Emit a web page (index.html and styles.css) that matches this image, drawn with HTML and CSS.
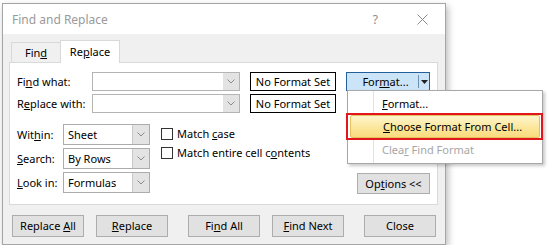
FILE: index.html
```html
<!DOCTYPE html>
<html lang="en">
<head>
    <meta charset="UTF-8">
    <title>Find and Replace</title>
    <link rel="stylesheet" href="styles.css">
</head>
<body>
    <div class="dialog">
        <div class="titlebar">
            <span class="title">Find and Replace</span>
            <span class="help">?</span>
            <svg class="close" width="11" height="11" viewBox="0 0 11 11"><path d="M0.5 0.5 L10.5 10.5 M10.5 0.5 L0.5 10.5" stroke="#8a8a8a" stroke-width="1"/></svg>
        </div>

        <div class="tabs">
            <div class="tab">Fin<u>d</u></div>
            <div class="tab active">Re<u>p</u>lace</div>
        </div>

        <div class="panel">
            <div class="top-grid">
                <label>Fi<u>n</u>d what:</label>
                <div class="combo"><span class="combo-btn"><svg width="8" height="5" viewBox="0 0 8 5"><path d="M0.5 0.5 L4 4 L7.5 0.5" fill="none" stroke="#8c8c8c"/></svg></span></div>
                <div class="fmt-box">No Format Set</div>
                <div class="split">
                    <span class="split-main">For<u>m</u>at...</span>
                    <span class="split-arrow"><svg width="7" height="4" viewBox="0 0 7 4"><path d="M0 0 L7 0 L3.5 4 Z" fill="#222"/></svg></span>

                    <!-- menu opened from the split button -->
                    <div class="menu">
                        <div class="menu-item"><u>F</u>ormat...</div>
                        <div class="menu-item hot"><div class="hot-bg"><u>C</u>hoose Format From Cell...</div></div>
                        <div class="menu-item disabled">Clea<u>r</u> Find Format</div>
                    </div>
                </div>

                <label>R<u>e</u>place with:</label>
                <div class="combo"><span class="combo-btn"><svg width="8" height="5" viewBox="0 0 8 5"><path d="M0.5 0.5 L4 4 L7.5 0.5" fill="none" stroke="#8c8c8c"/></svg></span></div>
                <div class="fmt-box">No Format Set</div>
            </div>

            <div class="lower">
                <div class="opt-grid">
                    <label>Wit<u>h</u>in:</label>
                    <div class="select"><span class="select-val">Sheet</span><span class="combo-btn"><svg width="8" height="5" viewBox="0 0 8 5"><path d="M0.5 0.5 L4 4 L7.5 0.5" fill="none" stroke="#8c8c8c"/></svg></span></div>
                    <label><u>S</u>earch:</label>
                    <div class="select"><span class="select-val">By Rows</span><span class="combo-btn"><svg width="8" height="5" viewBox="0 0 8 5"><path d="M0.5 0.5 L4 4 L7.5 0.5" fill="none" stroke="#8c8c8c"/></svg></span></div>
                    <label><u>L</u>ook in:</label>
                    <div class="select"><span class="select-val">Formulas</span><span class="combo-btn"><svg width="8" height="5" viewBox="0 0 8 5"><path d="M0.5 0.5 L4 4 L7.5 0.5" fill="none" stroke="#8c8c8c"/></svg></span></div>
                </div>
                <div class="checks">
                    <div class="check"><span class="box"></span><span>Match <u>c</u>ase</span></div>
                    <div class="check"><span class="box"></span><span>Match entire cell c<u>o</u>ntents</span></div>
                </div>
                <div class="btn options">Op<u>t</u>ions &lt;&lt;</div>
            </div>
        </div>

        <div class="buttons">
            <div class="btn">Replace <u>A</u>ll</div>
            <div class="btn"><u>R</u>eplace</div>
            <div class="btn wide-gap">Fi<u>n</u>d All</div>
            <div class="btn"><u>F</u>ind Next</div>
            <div class="btn wide-gap">Close</div>
        </div>
    </div>
</body>
</html>
```

FILE: styles.css
```css
* {
    box-sizing: border-box;
}

body {
    margin: 0;
    background: #fff;
    font-family: 'Noto Sans', sans-serif;
    font-size: 11px;
    color: #000;
}

u {
    text-decoration: underline;
    text-underline-offset: 1px;
}

label {
    white-space: nowrap;
}

.dialog {
    position: relative;
    margin: 3px 0 0 2px;
    width: 444px;
    height: 242px;
    background: #f0f0f0;
    border: 1px solid #a5a5a5;
    box-shadow: 2px 3px 7px rgba(0, 0, 0, 0.28);
}

.titlebar {
    display: flex;
    align-items: center;
    height: 30px;
    background: #fff;
    padding: 0 0 0 9px;
}

.title {
    flex: 1;
    font-size: 12px;
    color: #9a9a9a;
}

.help {
    font-size: 12px;
    color: #8a8a8a;
    margin-right: 39px;
}

.close {
    margin-right: 17px;
}

/* tabs */
.tabs {
    display: flex;
    align-items: flex-end;
    margin: 6px 0 0 8px;
    height: 22px;
}

.tab {
    height: 20px;
    width: 50px;
    padding-top: 2px;
    text-align: center;
    border: 1px solid #d9d9d9;
    border-bottom: none;
    background: #f0f0f0;
}

.tab.active {
    height: 23px;
    width: 60px;
    margin-left: -1px;
    margin-bottom: -1px;
    padding-top: 3px;
    background: #fff;
    position: relative;
    z-index: 1;
}

.panel {
    margin-left: 6px;
    width: 429px;
    height: 143px;
    background: #fff;
    border: 1px solid #d9d9d9;
    padding: 9px 0 0 7px;
}

.top-grid {
    display: grid;
    grid-template-columns: 65px 148px 86px 84px;
    grid-auto-rows: 19px;
    column-gap: 10px;
    row-gap: 3px;
    align-items: center;
}

.combo {
    height: 19px;
    border: 1px solid #b4b4b4;
    background: #fff;
    display: flex;
    justify-content: flex-end;
}

.combo-btn {
    width: 16px;
    background: #e3e3e3;
    display: flex;
    align-items: center;
    justify-content: center;
}

.fmt-box {
    height: 19px;
    line-height: 17px;
    border: 1px solid #000;
    text-align: center;
}

.split {
    position: relative;
    height: 19px;
    display: flex;
    background: #cce4f7;
    border: 1px solid #24609a;
}

.split-main {
    flex: 1;
    line-height: 17px;
    text-align: center;
    padding-left: 6px;
}

.split-arrow {
    width: 11px;
    margin: 2px 0;
    border-left: 1px solid #6f8fae;
    display: flex;
    align-items: center;
    justify-content: center;
}

/* popup menu */
.menu {
    position: absolute;
    left: 0;
    top: 17px;
    width: 196px;
    padding: 1px 1px 2px;
    background: #fff;
    border: 1px solid #a8a8a8;
    box-shadow: 2px 2px 3px rgba(0, 0, 0, 0.22);
    z-index: 5;
    background-image: linear-gradient(#e2e2e2, #e2e2e2);
    background-size: 1px 100%;
    background-position: 25px 0;
    background-repeat: no-repeat;
}

.menu-item {
    position: relative;
    height: 23px;
    line-height: 23px;
    padding-left: 33px;
}

.menu-item.disabled {
    color: #a6a6a6;
}

.menu-item.hot {
    padding: 0 1px;
}

.hot-bg {
    height: 23px;
    line-height: 21px;
    padding-left: 32px;
    border: 1px solid #e6c15f;
    border-radius: 2px;
    background: linear-gradient(#fdf5cc, #fbe597 60%, #f9dc7f);
}

.menu-item.hot::after {
    content: "";
    position: absolute;
    top: -2px;
    bottom: -2px;
    left: -3px;
    right: -2px;
    border: 2px solid #e2171e;
}

/* lower options */
.lower {
    display: flex;
    margin-top: 11px;
}

.opt-grid {
    display: grid;
    grid-template-columns: 46px 87px;
    grid-auto-rows: 21px;
    row-gap: 3px;
    align-items: center;
}

.select {
    height: 21px;
    border: 1px solid #acacac;
    display: flex;
}

.select-val {
    flex: 1;
    padding-left: 4px;
    line-height: 19px;
}

.select .combo-btn {
    width: 17px;
    border-left: 1px solid #c8c8c8;
}

.checks {
    margin-left: 11px;
}

.check {
    height: 19px;
    display: flex;
    align-items: center;
}

.box {
    width: 12px;
    height: 12px;
    border: 1px solid #333;
    background: #fff;
    margin-right: 4px;
}

.btn {
    height: 22px;
    width: 72px;
    line-height: 20px;
    text-align: center;
    background: #e1e1e1;
    border: 1px solid #adadad;
}

.options {
    width: 73px;
    height: 21px;
    line-height: 19px;
    margin-left: auto;
    margin-right: 7px;
    align-self: flex-end;
    margin-bottom: -1px;
}

.buttons {
    display: flex;
    gap: 12px;
    margin: 10px 0 0 9px;
}

.buttons .wide-gap {
    margin-left: 8px;
}
```
